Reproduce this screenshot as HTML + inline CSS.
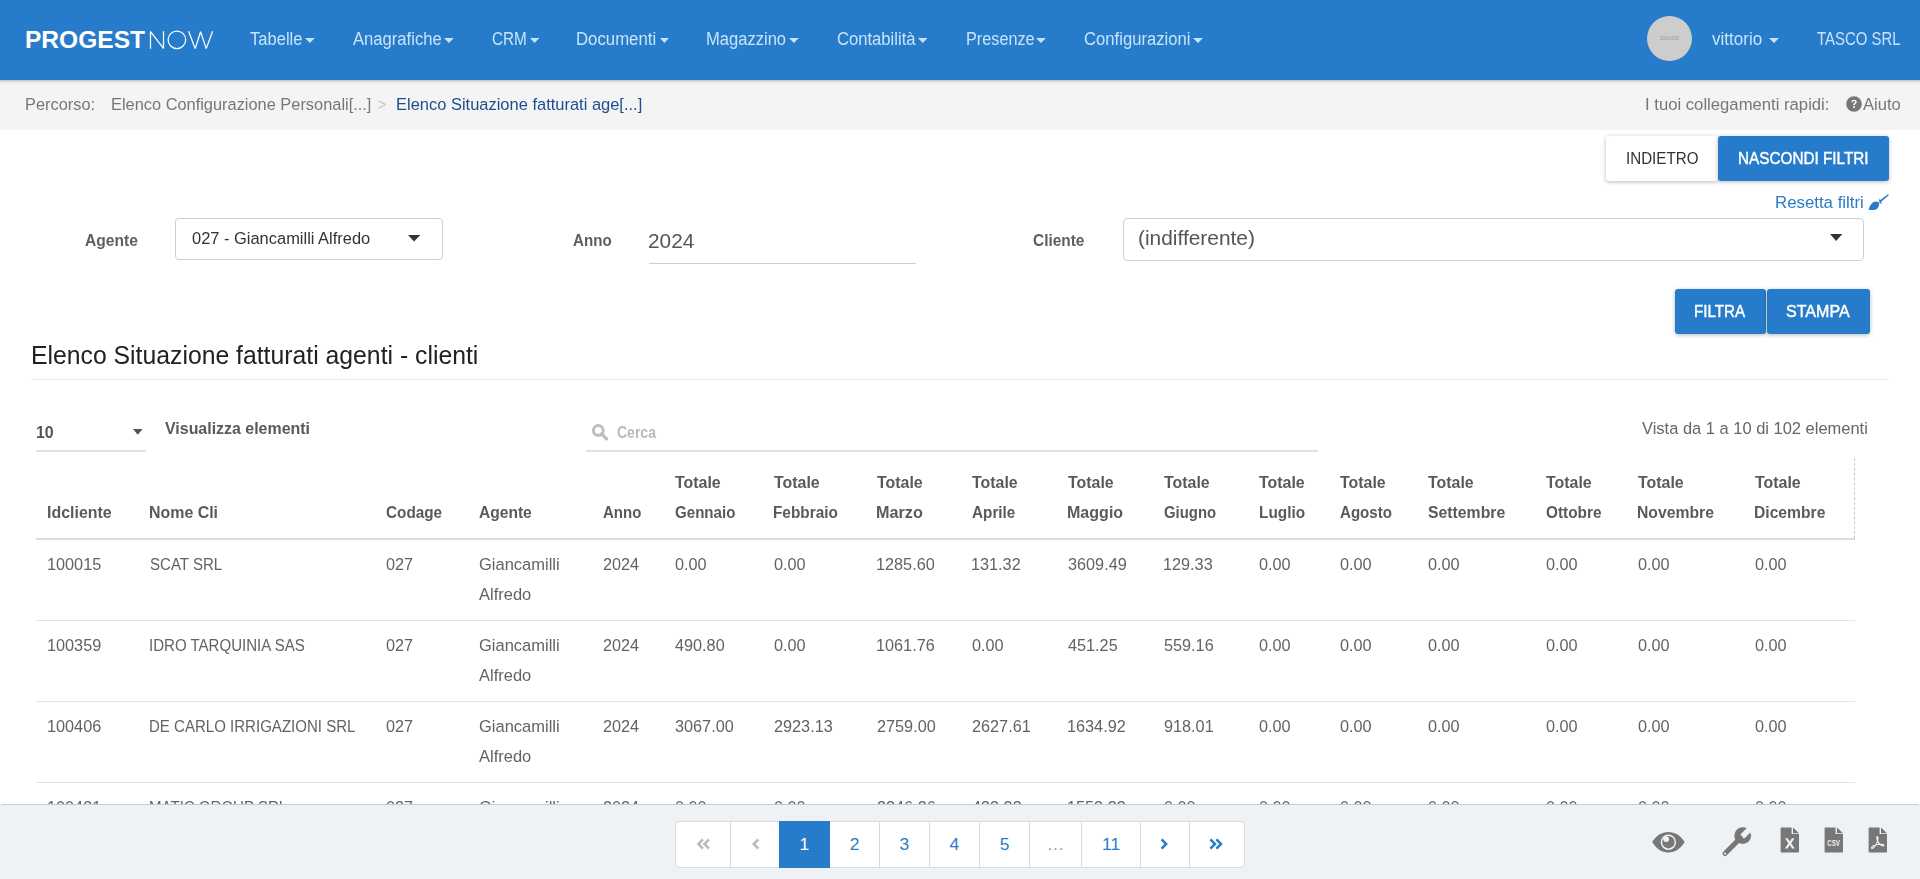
<!DOCTYPE html>
<html><head><meta charset="utf-8"><title>Progest</title>
<style>
html,body{margin:0;padding:0;width:1920px;height:879px;overflow:hidden;background:#fff;font-family:"Liberation Sans",sans-serif}
.a{position:absolute}
.t{position:absolute;white-space:pre;line-height:1;transform-origin:0 0}
</style></head><body>
<!-- header -->
<div class="a" style="left:0;top:0;width:1920px;height:80px;background:#267cca"></div>
<div class="a" style="left:0;top:80px;width:1920px;height:50px;background:#f4f4f4"></div>
<div class="a" style="left:0;top:80px;width:1920px;height:4px;background:linear-gradient(rgba(0,0,0,.22),rgba(0,0,0,.06) 50%,rgba(0,0,0,0))"></div>
<svg class="a" style="left:0;top:0" width="240" height="80" viewBox="0 0 240 80">
 <text x="25" y="48.3" font-family="Liberation Sans" font-weight="700" font-size="24.5" fill="#fff" textLength="120" lengthAdjust="spacingAndGlyphs">PROGEST</text>
 <g fill="none" stroke="#fff" stroke-width="1.25" stroke-linejoin="bevel">
  <path d="M150.5 48.8V31.6L163.5 48.4V31.2"/>
  <circle cx="176.9" cy="39.8" r="8.8"/>
  <path d="M188.6 31.2L195.2 48.6L200.6 31.8L206.2 48.6L212.6 31.2"/>
 </g>
</svg>
<div class="a" style="left:1647px;top:16px;width:45px;height:45px;border-radius:50%;background:#cdcdcd"></div>
<div class="a" style="left:1647px;top:34px;width:45px;text-align:center;font-size:5px;color:#999;line-height:8px">100x100</div>
<svg class="a" style="left:305.0px;top:38.0px" width="9.8" height="5.0" viewBox="0 0 9.8 5.0"><path d="M0 0H9.8L4.90 5.0Z" fill="#c9e3fa"/></svg>
<svg class="a" style="left:444.0px;top:38.0px" width="9.8" height="5.0" viewBox="0 0 9.8 5.0"><path d="M0 0H9.8L4.90 5.0Z" fill="#c9e3fa"/></svg>
<svg class="a" style="left:529.6px;top:38.0px" width="9.2" height="5.0" viewBox="0 0 9.2 5.0"><path d="M0 0H9.2L4.60 5.0Z" fill="#c9e3fa"/></svg>
<svg class="a" style="left:659.7px;top:38.0px" width="8.9" height="5.0" viewBox="0 0 8.9 5.0"><path d="M0 0H8.9L4.45 5.0Z" fill="#c9e3fa"/></svg>
<svg class="a" style="left:789.0px;top:38.0px" width="9.8" height="5.0" viewBox="0 0 9.8 5.0"><path d="M0 0H9.8L4.90 5.0Z" fill="#c9e3fa"/></svg>
<svg class="a" style="left:918.3px;top:38.0px" width="9.6" height="5.0" viewBox="0 0 9.6 5.0"><path d="M0 0H9.6L4.80 5.0Z" fill="#c9e3fa"/></svg>
<svg class="a" style="left:1036.0px;top:38.0px" width="10.0" height="5.0" viewBox="0 0 10.0 5.0"><path d="M0 0H10.0L5.00 5.0Z" fill="#c9e3fa"/></svg>
<svg class="a" style="left:1193.0px;top:38.0px" width="10.0" height="5.0" viewBox="0 0 10.0 5.0"><path d="M0 0H10.0L5.00 5.0Z" fill="#c9e3fa"/></svg>
<svg class="a" style="left:1769.0px;top:37.7px" width="10.0" height="5.1" viewBox="0 0 10.0 5.1"><path d="M0 0H10.0L5.00 5.1Z" fill="#c9e3fa"/></svg>
<!-- help icon -->
<svg class="a" style="left:1846px;top:96px" width="16" height="16" viewBox="0 0 16 16"><circle cx="8" cy="8" r="7.8" fill="#777"/><path d="M5.3 6.2C5.3 4.6 6.5 3.7 8 3.7C9.6 3.7 10.7 4.6 10.7 5.9C10.7 7.5 8.9 7.6 8.9 9.2H7.1C7.1 7 9 6.9 9 5.9C9 5.3 8.6 5.1 8 5.1C7.4 5.1 7 5.5 7 6.2Z" fill="#f4f4f4"/><rect x="7.1" y="10.3" width="1.8" height="1.8" fill="#f4f4f4"/></svg>
<!-- buttons -->
<div class="a" style="left:1606px;top:136px;width:112px;height:45px;background:#fff;border-radius:3px;box-shadow:0 1px 4px rgba(0,0,0,.28)"></div>
<div class="a" style="left:1718px;top:136px;width:171px;height:45px;background:#267cca;border-radius:3px;box-shadow:0 1px 4px rgba(0,0,0,.28)"></div>
<!-- brush -->
<svg class="a" style="left:1868px;top:193px" width="22" height="18" viewBox="0 0 22 18"><path d="M0.6 16.8C1.6 13.6 2.6 11.4 4.8 9.6C6.8 8.2 9.6 8.2 10.8 9.6C11.6 11 11.2 13.6 9.4 15.4C7.6 17 4.2 17.3 0.6 16.8Z" fill="#2a7bc6"/><path d="M11.3 7.8L20 1.2L20.8 2.2L12.6 9.2Z" fill="#2a7bc6"/><path d="M10.8 5.3L11.6 10.2L14 10.6Z" fill="#2a7bc6"/></svg>
<!-- filter boxes -->
<div class="a" style="left:175px;top:218px;width:266px;height:40px;border:1px solid #cfcfcf;border-radius:4px"></div>
<svg class="a" style="left:407.6px;top:235px" width="12.2" height="6.6" viewBox="0 0 12.2 6.6"><path d="M0 0H12.2L6.1 6.6Z" fill="#333"/></svg>
<div class="a" style="left:649px;top:262.5px;width:267px;height:1.5px;background:#cfcfcf"></div>
<div class="a" style="left:1123px;top:218px;width:739px;height:41px;border:1px solid #cfcfcf;border-radius:4px"></div>
<svg class="a" style="left:1830px;top:234px" width="12.3" height="7" viewBox="0 0 12.3 7"><path d="M0 0H12.3L6.15 7Z" fill="#333"/></svg>
<div class="a" style="left:1675px;top:289px;width:91px;height:44.5px;background:#267cca;border-radius:3px;box-shadow:0 1px 4px rgba(0,0,0,.28)"></div>
<div class="a" style="left:1766.5px;top:289px;width:103.5px;height:44.5px;background:#267cca;border-radius:3px;box-shadow:0 1px 4px rgba(0,0,0,.28)"></div>
<div class="a" style="left:31px;top:379px;width:1858px;height:1px;background:#e6e6e6"></div>
<!-- table controls -->
<div class="a" style="left:36px;top:450px;width:110px;height:2px;background:#e0e0e0"></div>
<svg class="a" style="left:132.7px;top:429.3px" width="9.6" height="5.7" viewBox="0 0 9.6 5.7"><path d="M0 0H9.6L4.8 5.7Z" fill="#555"/></svg>
<div class="a" style="left:586px;top:450px;width:732px;height:2px;background:#e0e0e0"></div>
<svg class="a" style="left:590px;top:422px" width="20" height="20" viewBox="0 0 20 20"><circle cx="8.3" cy="8.4" r="4.9" fill="none" stroke="#bdbdbd" stroke-width="2.9"/><path d="M11.6 11.8L16.6 16.8" stroke="#bdbdbd" stroke-width="3.2" stroke-linecap="round"/></svg>
<!-- table -->
<div class="a" style="left:36px;top:538px;width:1819px;height:2px;background:#dcdcdc"></div>
<div class="a" style="left:1853.5px;top:458px;width:0;height:81px;border-left:1px dashed #c8c8c8"></div>
<div class="a" style="left:36px;top:620px;width:1819px;height:1px;background:#e3e3e3"></div>
<div class="a" style="left:36px;top:701px;width:1819px;height:1px;background:#e3e3e3"></div>
<div class="a" style="left:36px;top:782px;width:1819px;height:1px;background:#e3e3e3"></div>
<span class="t" style="left:250.30px;top:31.00px;font-size:17.6px;font-weight:400;color:#c9e3fa;transform:scaleX(0.9405);">Tabelle</span>
<span class="t" style="left:353.00px;top:31.00px;font-size:17.6px;font-weight:400;color:#c9e3fa;transform:scaleX(0.9451);">Anagrafiche</span>
<span class="t" style="left:491.50px;top:31.00px;font-size:17.6px;font-weight:400;color:#c9e3fa;transform:scaleX(0.8678);">CRM</span>
<span class="t" style="left:576.05px;top:31.00px;font-size:17.6px;font-weight:400;color:#c9e3fa;transform:scaleX(0.9527);">Documenti</span>
<span class="t" style="left:705.76px;top:31.00px;font-size:17.6px;font-weight:400;color:#c9e3fa;transform:scaleX(0.9407);">Magazzino</span>
<span class="t" style="left:836.70px;top:31.00px;font-size:17.6px;font-weight:400;color:#c9e3fa;transform:scaleX(0.9442);">Contabilità</span>
<span class="t" style="left:965.58px;top:31.00px;font-size:17.6px;font-weight:400;color:#c9e3fa;transform:scaleX(0.9236);">Presenze</span>
<span class="t" style="left:1084.20px;top:31.00px;font-size:17.6px;font-weight:400;color:#c9e3fa;transform:scaleX(0.9466);">Configurazioni</span>
<span class="t" style="left:1711.50px;top:30.80px;font-size:17.6px;font-weight:400;color:#c9e3fa;transform:scaleX(0.9686);">vittorio</span>
<span class="t" style="left:1817.00px;top:31.00px;font-size:17.6px;font-weight:400;color:#c9e3fa;transform:scaleX(0.8486);">TASCO SRL</span>
<span class="t" style="left:25.06px;top:96.00px;font-size:17.4px;font-weight:400;color:#777;transform:scaleX(0.9409);">Percorso:</span>
<span class="t" style="left:111.06px;top:96.00px;font-size:17.4px;font-weight:400;color:#777;transform:scaleX(0.9419);">Elenco Configurazione Personali[...]</span>
<span class="t" style="left:377.70px;top:96.00px;font-size:17.4px;font-weight:400;color:#c4c4c4;transform:scaleX(0.8000);">&gt;</span>
<span class="t" style="left:395.75px;top:96.00px;font-size:17.4px;font-weight:400;color:#1d4f8e;transform:scaleX(0.9469);">Elenco Situazione fatturati age[...]</span>
<span class="t" style="left:1644.94px;top:95.90px;font-size:17.4px;font-weight:400;color:#777;transform:scaleX(0.9589);">I tuoi collegamenti rapidi:</span>
<span class="t" style="left:1863.30px;top:95.90px;font-size:17.4px;font-weight:400;color:#777;transform:scaleX(0.9521);">Aiuto</span>
<span class="t" style="left:1625.63px;top:150.10px;font-size:17.4px;font-weight:400;color:#333;transform:scaleX(0.8717);">INDIETRO</span>
<span class="t" style="left:1738.42px;top:149.70px;font-size:17.4px;font-weight:400;color:#fff;transform:scaleX(0.8797);-webkit-text-stroke:0.45px #fff">NASCONDI FILTRI</span>
<span class="t" style="left:1775.03px;top:194.20px;font-size:17.4px;font-weight:400;color:#2a7bc6;transform:scaleX(0.9672);">Resetta filtri</span>
<span class="t" style="left:84.60px;top:232.20px;font-size:17.1px;font-weight:700;color:#5e5e5e;transform:scaleX(0.9125);">Agente</span>
<span class="t" style="left:191.50px;top:231.00px;font-size:16.9px;font-weight:400;color:#333;transform:scaleX(0.9733);">027 - Giancamilli Alfredo</span>
<span class="t" style="left:572.70px;top:232.20px;font-size:17.1px;font-weight:700;color:#5e5e5e;transform:scaleX(0.8860);">Anno</span>
<span class="t" style="left:647.97px;top:231.30px;font-size:20.3px;font-weight:400;color:#555;transform:scaleX(1.0265);">2024</span>
<span class="t" style="left:1033.30px;top:231.90px;font-size:17.1px;font-weight:700;color:#5e5e5e;transform:scaleX(0.9029);">Cliente</span>
<span class="t" style="left:1138.17px;top:228.00px;font-size:20.3px;font-weight:400;color:#555;transform:scaleX(1.0301);">(indifferente)</span>
<span class="t" style="left:1694.13px;top:303.20px;font-size:17.4px;font-weight:400;color:#fff;transform:scaleX(0.8739);-webkit-text-stroke:0.45px #fff">FILTRA</span>
<span class="t" style="left:1786.00px;top:303.20px;font-size:17.4px;font-weight:400;color:#fff;transform:scaleX(0.9232);-webkit-text-stroke:0.45px #fff">STAMPA</span>
<span class="t" style="left:30.92px;top:343.20px;font-size:25px;font-weight:400;color:#222;transform:scaleX(0.9904);">Elenco Situazione fatturati agenti - clienti</span>
<span class="t" style="left:35.73px;top:424.40px;font-size:16.4px;font-weight:700;color:#555;transform:scaleX(0.9699);">10</span>
<span class="t" style="left:165.00px;top:420.30px;font-size:17.1px;font-weight:700;color:#5a5a5a;transform:scaleX(0.9325);">Visualizza elementi</span>
<span class="t" style="left:616.70px;top:425.20px;font-size:16.6px;font-weight:700;color:#bababa;transform:scaleX(0.8444);">Cerca</span>
<span class="t" style="left:1642.40px;top:420.20px;font-size:17.4px;font-weight:400;color:#666;transform:scaleX(0.9469);">Vista da 1 a 10 di 102 elementi</span>
<span class="t" style="left:46.77px;top:504.00px;font-size:17.1px;font-weight:700;color:#5a5a5a;transform:scaleX(0.9331);">Idcliente</span>
<span class="t" style="left:148.57px;top:504.00px;font-size:17.1px;font-weight:700;color:#5a5a5a;transform:scaleX(0.9318);">Nome Cli</span>
<span class="t" style="left:385.70px;top:504.00px;font-size:17.1px;font-weight:700;color:#5a5a5a;transform:scaleX(0.8942);">Codage</span>
<span class="t" style="left:478.70px;top:504.00px;font-size:17.1px;font-weight:700;color:#5a5a5a;transform:scaleX(0.9107);">Agente</span>
<span class="t" style="left:603.40px;top:504.00px;font-size:17.1px;font-weight:700;color:#5a5a5a;transform:scaleX(0.8768);">Anno</span>
<span class="t" style="left:675.00px;top:474.00px;font-size:17.1px;font-weight:700;color:#5a5a5a;transform:scaleX(0.9308);">Totale</span>
<span class="t" style="left:675.00px;top:504.00px;font-size:17.1px;font-weight:700;color:#5a5a5a;transform:scaleX(0.8831);">Gennaio</span>
<span class="t" style="left:773.50px;top:474.00px;font-size:17.1px;font-weight:700;color:#5a5a5a;transform:scaleX(0.9308);">Totale</span>
<span class="t" style="left:772.60px;top:504.00px;font-size:17.1px;font-weight:700;color:#5a5a5a;transform:scaleX(0.8977);">Febbraio</span>
<span class="t" style="left:876.70px;top:474.00px;font-size:17.1px;font-weight:700;color:#5a5a5a;transform:scaleX(0.9308);">Totale</span>
<span class="t" style="left:875.75px;top:504.00px;font-size:17.1px;font-weight:700;color:#5a5a5a;transform:scaleX(0.9469);">Marzo</span>
<span class="t" style="left:972.00px;top:474.00px;font-size:17.1px;font-weight:700;color:#5a5a5a;transform:scaleX(0.9308);">Totale</span>
<span class="t" style="left:972.00px;top:504.00px;font-size:17.1px;font-weight:700;color:#5a5a5a;transform:scaleX(0.8949);">Aprile</span>
<span class="t" style="left:1067.70px;top:474.00px;font-size:17.1px;font-weight:700;color:#5a5a5a;transform:scaleX(0.9308);">Totale</span>
<span class="t" style="left:1066.76px;top:504.00px;font-size:17.1px;font-weight:700;color:#5a5a5a;transform:scaleX(0.9387);">Maggio</span>
<span class="t" style="left:1163.50px;top:474.00px;font-size:17.1px;font-weight:700;color:#5a5a5a;transform:scaleX(0.9308);">Totale</span>
<span class="t" style="left:1163.50px;top:504.00px;font-size:17.1px;font-weight:700;color:#5a5a5a;transform:scaleX(0.8708);">Giugno</span>
<span class="t" style="left:1259.40px;top:474.00px;font-size:17.1px;font-weight:700;color:#5a5a5a;transform:scaleX(0.9308);">Totale</span>
<span class="t" style="left:1258.50px;top:504.00px;font-size:17.1px;font-weight:700;color:#5a5a5a;transform:scaleX(0.8992);">Luglio</span>
<span class="t" style="left:1339.60px;top:474.00px;font-size:17.1px;font-weight:700;color:#5a5a5a;transform:scaleX(0.9308);">Totale</span>
<span class="t" style="left:1339.60px;top:504.00px;font-size:17.1px;font-weight:700;color:#5a5a5a;transform:scaleX(0.8814);">Agosto</span>
<span class="t" style="left:1428.30px;top:474.00px;font-size:17.1px;font-weight:700;color:#5a5a5a;transform:scaleX(0.9308);">Totale</span>
<span class="t" style="left:1428.30px;top:504.00px;font-size:17.1px;font-weight:700;color:#5a5a5a;transform:scaleX(0.9237);">Settembre</span>
<span class="t" style="left:1546.30px;top:474.00px;font-size:17.1px;font-weight:700;color:#5a5a5a;transform:scaleX(0.9308);">Totale</span>
<span class="t" style="left:1546.30px;top:504.00px;font-size:17.1px;font-weight:700;color:#5a5a5a;transform:scaleX(0.8985);">Ottobre</span>
<span class="t" style="left:1638.30px;top:474.00px;font-size:17.1px;font-weight:700;color:#5a5a5a;transform:scaleX(0.9308);">Totale</span>
<span class="t" style="left:1637.38px;top:504.00px;font-size:17.1px;font-weight:700;color:#5a5a5a;transform:scaleX(0.9197);">Novembre</span>
<span class="t" style="left:1755.00px;top:474.00px;font-size:17.1px;font-weight:700;color:#5a5a5a;transform:scaleX(0.9308);">Totale</span>
<span class="t" style="left:1754.08px;top:504.00px;font-size:17.1px;font-weight:700;color:#5a5a5a;transform:scaleX(0.9162);">Dicembre</span>
<span class="t" style="left:46.75px;top:556.00px;font-size:17.1px;font-weight:400;color:#636363;transform:scaleX(0.9500);">100015</span>
<span class="t" style="left:149.50px;top:556.00px;font-size:17.1px;font-weight:400;color:#636363;transform:scaleX(0.8800);">SCAT SRL</span>
<span class="t" style="left:385.70px;top:556.00px;font-size:17.1px;font-weight:400;color:#636363;transform:scaleX(0.9500);">027</span>
<span class="t" style="left:478.70px;top:556.00px;font-size:17.1px;font-weight:400;color:#636363;transform:scaleX(0.9650);">Giancamilli</span>
<span class="t" style="left:603.40px;top:556.00px;font-size:17.1px;font-weight:400;color:#636363;transform:scaleX(0.9500);">2024</span>
<span class="t" style="left:675.00px;top:556.00px;font-size:17.1px;font-weight:400;color:#636363;transform:scaleX(0.9500);">0.00</span>
<span class="t" style="left:773.50px;top:556.00px;font-size:17.1px;font-weight:400;color:#636363;transform:scaleX(0.9500);">0.00</span>
<span class="t" style="left:875.75px;top:556.00px;font-size:17.1px;font-weight:400;color:#636363;transform:scaleX(0.9500);">1285.60</span>
<span class="t" style="left:971.05px;top:556.00px;font-size:17.1px;font-weight:400;color:#636363;transform:scaleX(0.9500);">131.32</span>
<span class="t" style="left:1067.70px;top:556.00px;font-size:17.1px;font-weight:400;color:#636363;transform:scaleX(0.9500);">3609.49</span>
<span class="t" style="left:1162.55px;top:556.00px;font-size:17.1px;font-weight:400;color:#636363;transform:scaleX(0.9500);">129.33</span>
<span class="t" style="left:1259.40px;top:556.00px;font-size:17.1px;font-weight:400;color:#636363;transform:scaleX(0.9500);">0.00</span>
<span class="t" style="left:1339.60px;top:556.00px;font-size:17.1px;font-weight:400;color:#636363;transform:scaleX(0.9500);">0.00</span>
<span class="t" style="left:1428.30px;top:556.00px;font-size:17.1px;font-weight:400;color:#636363;transform:scaleX(0.9500);">0.00</span>
<span class="t" style="left:1546.30px;top:556.00px;font-size:17.1px;font-weight:400;color:#636363;transform:scaleX(0.9500);">0.00</span>
<span class="t" style="left:1638.30px;top:556.00px;font-size:17.1px;font-weight:400;color:#636363;transform:scaleX(0.9500);">0.00</span>
<span class="t" style="left:1755.00px;top:556.00px;font-size:17.1px;font-weight:400;color:#636363;transform:scaleX(0.9500);">0.00</span>
<span class="t" style="left:478.70px;top:586.00px;font-size:17.1px;font-weight:400;color:#636363;transform:scaleX(0.9650);">Alfredo</span>
<span class="t" style="left:46.75px;top:637.30px;font-size:17.1px;font-weight:400;color:#636363;transform:scaleX(0.9500);">100359</span>
<span class="t" style="left:148.62px;top:637.30px;font-size:17.1px;font-weight:400;color:#636363;transform:scaleX(0.8800);">IDRO TARQUINIA SAS</span>
<span class="t" style="left:385.70px;top:637.30px;font-size:17.1px;font-weight:400;color:#636363;transform:scaleX(0.9500);">027</span>
<span class="t" style="left:478.70px;top:637.30px;font-size:17.1px;font-weight:400;color:#636363;transform:scaleX(0.9650);">Giancamilli</span>
<span class="t" style="left:603.40px;top:637.30px;font-size:17.1px;font-weight:400;color:#636363;transform:scaleX(0.9500);">2024</span>
<span class="t" style="left:675.00px;top:637.30px;font-size:17.1px;font-weight:400;color:#636363;transform:scaleX(0.9500);">490.80</span>
<span class="t" style="left:773.50px;top:637.30px;font-size:17.1px;font-weight:400;color:#636363;transform:scaleX(0.9500);">0.00</span>
<span class="t" style="left:875.75px;top:637.30px;font-size:17.1px;font-weight:400;color:#636363;transform:scaleX(0.9500);">1061.76</span>
<span class="t" style="left:972.00px;top:637.30px;font-size:17.1px;font-weight:400;color:#636363;transform:scaleX(0.9500);">0.00</span>
<span class="t" style="left:1067.70px;top:637.30px;font-size:17.1px;font-weight:400;color:#636363;transform:scaleX(0.9500);">451.25</span>
<span class="t" style="left:1163.50px;top:637.30px;font-size:17.1px;font-weight:400;color:#636363;transform:scaleX(0.9500);">559.16</span>
<span class="t" style="left:1259.40px;top:637.30px;font-size:17.1px;font-weight:400;color:#636363;transform:scaleX(0.9500);">0.00</span>
<span class="t" style="left:1339.60px;top:637.30px;font-size:17.1px;font-weight:400;color:#636363;transform:scaleX(0.9500);">0.00</span>
<span class="t" style="left:1428.30px;top:637.30px;font-size:17.1px;font-weight:400;color:#636363;transform:scaleX(0.9500);">0.00</span>
<span class="t" style="left:1546.30px;top:637.30px;font-size:17.1px;font-weight:400;color:#636363;transform:scaleX(0.9500);">0.00</span>
<span class="t" style="left:1638.30px;top:637.30px;font-size:17.1px;font-weight:400;color:#636363;transform:scaleX(0.9500);">0.00</span>
<span class="t" style="left:1755.00px;top:637.30px;font-size:17.1px;font-weight:400;color:#636363;transform:scaleX(0.9500);">0.00</span>
<span class="t" style="left:478.70px;top:667.30px;font-size:17.1px;font-weight:400;color:#636363;transform:scaleX(0.9650);">Alfredo</span>
<span class="t" style="left:46.75px;top:718.30px;font-size:17.1px;font-weight:400;color:#636363;transform:scaleX(0.9500);">100406</span>
<span class="t" style="left:148.62px;top:718.30px;font-size:17.1px;font-weight:400;color:#636363;transform:scaleX(0.8800);">DE CARLO IRRIGAZIONI SRL</span>
<span class="t" style="left:385.70px;top:718.30px;font-size:17.1px;font-weight:400;color:#636363;transform:scaleX(0.9500);">027</span>
<span class="t" style="left:478.70px;top:718.30px;font-size:17.1px;font-weight:400;color:#636363;transform:scaleX(0.9650);">Giancamilli</span>
<span class="t" style="left:603.40px;top:718.30px;font-size:17.1px;font-weight:400;color:#636363;transform:scaleX(0.9500);">2024</span>
<span class="t" style="left:675.00px;top:718.30px;font-size:17.1px;font-weight:400;color:#636363;transform:scaleX(0.9500);">3067.00</span>
<span class="t" style="left:773.50px;top:718.30px;font-size:17.1px;font-weight:400;color:#636363;transform:scaleX(0.9500);">2923.13</span>
<span class="t" style="left:876.70px;top:718.30px;font-size:17.1px;font-weight:400;color:#636363;transform:scaleX(0.9500);">2759.00</span>
<span class="t" style="left:972.00px;top:718.30px;font-size:17.1px;font-weight:400;color:#636363;transform:scaleX(0.9500);">2627.61</span>
<span class="t" style="left:1066.75px;top:718.30px;font-size:17.1px;font-weight:400;color:#636363;transform:scaleX(0.9500);">1634.92</span>
<span class="t" style="left:1163.50px;top:718.30px;font-size:17.1px;font-weight:400;color:#636363;transform:scaleX(0.9500);">918.01</span>
<span class="t" style="left:1259.40px;top:718.30px;font-size:17.1px;font-weight:400;color:#636363;transform:scaleX(0.9500);">0.00</span>
<span class="t" style="left:1339.60px;top:718.30px;font-size:17.1px;font-weight:400;color:#636363;transform:scaleX(0.9500);">0.00</span>
<span class="t" style="left:1428.30px;top:718.30px;font-size:17.1px;font-weight:400;color:#636363;transform:scaleX(0.9500);">0.00</span>
<span class="t" style="left:1546.30px;top:718.30px;font-size:17.1px;font-weight:400;color:#636363;transform:scaleX(0.9500);">0.00</span>
<span class="t" style="left:1638.30px;top:718.30px;font-size:17.1px;font-weight:400;color:#636363;transform:scaleX(0.9500);">0.00</span>
<span class="t" style="left:1755.00px;top:718.30px;font-size:17.1px;font-weight:400;color:#636363;transform:scaleX(0.9500);">0.00</span>
<span class="t" style="left:478.70px;top:748.30px;font-size:17.1px;font-weight:400;color:#636363;transform:scaleX(0.9650);">Alfredo</span>
<span class="t" style="left:46.75px;top:799.30px;font-size:17.1px;font-weight:400;color:#636363;transform:scaleX(0.9500);">100431</span>
<span class="t" style="left:148.62px;top:799.30px;font-size:17.1px;font-weight:400;color:#636363;transform:scaleX(0.8800);">MATIC GROUP SRL</span>
<span class="t" style="left:385.70px;top:799.30px;font-size:17.1px;font-weight:400;color:#636363;transform:scaleX(0.9500);">027</span>
<span class="t" style="left:478.70px;top:799.30px;font-size:17.1px;font-weight:400;color:#636363;transform:scaleX(0.9650);">Giancamilli</span>
<span class="t" style="left:603.40px;top:799.30px;font-size:17.1px;font-weight:400;color:#636363;transform:scaleX(0.9500);">2024</span>
<span class="t" style="left:675.00px;top:799.30px;font-size:17.1px;font-weight:400;color:#636363;transform:scaleX(0.9500);">0.00</span>
<span class="t" style="left:773.50px;top:799.30px;font-size:17.1px;font-weight:400;color:#636363;transform:scaleX(0.9500);">0.00</span>
<span class="t" style="left:876.70px;top:799.30px;font-size:17.1px;font-weight:400;color:#636363;transform:scaleX(0.9500);">2246.26</span>
<span class="t" style="left:972.00px;top:799.30px;font-size:17.1px;font-weight:400;color:#636363;transform:scaleX(0.9500);">433.33</span>
<span class="t" style="left:1066.75px;top:799.30px;font-size:17.1px;font-weight:400;color:#636363;transform:scaleX(0.9500);">1553.33</span>
<span class="t" style="left:1163.50px;top:799.30px;font-size:17.1px;font-weight:400;color:#636363;transform:scaleX(0.9500);">0.00</span>
<span class="t" style="left:1259.40px;top:799.30px;font-size:17.1px;font-weight:400;color:#636363;transform:scaleX(0.9500);">0.00</span>
<span class="t" style="left:1339.60px;top:799.30px;font-size:17.1px;font-weight:400;color:#636363;transform:scaleX(0.9500);">0.00</span>
<span class="t" style="left:1428.30px;top:799.30px;font-size:17.1px;font-weight:400;color:#636363;transform:scaleX(0.9500);">0.00</span>
<span class="t" style="left:1546.30px;top:799.30px;font-size:17.1px;font-weight:400;color:#636363;transform:scaleX(0.9500);">0.00</span>
<span class="t" style="left:1638.30px;top:799.30px;font-size:17.1px;font-weight:400;color:#636363;transform:scaleX(0.9500);">0.00</span>
<span class="t" style="left:1755.00px;top:799.30px;font-size:17.1px;font-weight:400;color:#636363;transform:scaleX(0.9500);">0.00</span>
<!-- footer -->
<div class="a" style="left:0;top:804px;width:1920px;height:80px;background:#eef2f5;border-top:1px solid #cacaca;border-radius:3px 3px 0 0;z-index:5"></div>
<div class="a" style="left:675px;top:821px;width:568px;height:45px;border:1px solid #dadada;border-radius:4px;background:#fff;z-index:6"></div>
<div class="a" style="left:730px;top:822px;width:1px;height:45px;background:#dadada;z-index:6"></div>
<div class="a" style="left:879px;top:822px;width:1px;height:45px;background:#dadada;z-index:6"></div>
<div class="a" style="left:929px;top:822px;width:1px;height:45px;background:#dadada;z-index:6"></div>
<div class="a" style="left:979px;top:822px;width:1px;height:45px;background:#dadada;z-index:6"></div>
<div class="a" style="left:1029px;top:822px;width:1px;height:45px;background:#dadada;z-index:6"></div>
<div class="a" style="left:1081px;top:822px;width:1px;height:45px;background:#dadada;z-index:6"></div>
<div class="a" style="left:1140px;top:822px;width:1px;height:45px;background:#dadada;z-index:6"></div>
<div class="a" style="left:1189px;top:822px;width:1px;height:45px;background:#dadada;z-index:6"></div>
<div class="a" style="left:779px;top:821px;width:50.5px;height:47px;background:#267cca;z-index:6"></div>
<div class="a" style="left:779.0px;top:821px;width:50.8px;height:47px;line-height:47px;text-align:center;font-size:17.4px;color:#fff;z-index:7">1</div>
<div class="a" style="left:829.8px;top:821px;width:49.7px;height:47px;line-height:47px;text-align:center;font-size:17.4px;color:#2a7bc6;z-index:7">2</div>
<div class="a" style="left:879.5px;top:821px;width:49.9px;height:47px;line-height:47px;text-align:center;font-size:17.4px;color:#2a7bc6;z-index:7">3</div>
<div class="a" style="left:929.4px;top:821px;width:50.1px;height:47px;line-height:47px;text-align:center;font-size:17.4px;color:#2a7bc6;z-index:7">4</div>
<div class="a" style="left:979.5px;top:821px;width:50.0px;height:47px;line-height:47px;text-align:center;font-size:17.4px;color:#2a7bc6;z-index:7">5</div>
<div class="a" style="left:1029.5px;top:821px;width:52.1px;height:47px;line-height:47px;text-align:center;font-size:17.4px;color:#999;z-index:7">…</div>
<div class="a" style="left:1081.6px;top:821px;width:59.0px;height:47px;line-height:47px;text-align:center;font-size:17.4px;color:#2a7bc6;z-index:7">11</div>
<svg class="a" style="left:0;top:0;z-index:8" width="1920" height="879" viewBox="0 0 1920 879"><path d="M703.00 839.4L698.40 844L703.00 848.6" fill="none" stroke="#bbb" stroke-width="2.5"/><path d="M709.00 839.4L704.40 844L709.00 848.6" fill="none" stroke="#bbb" stroke-width="2.5"/><path d="M758.30 839.4L753.70 844L758.30 848.6" fill="none" stroke="#bbb" stroke-width="2.5"/><path d="M1161.60 839.4L1166.20 844L1161.60 848.6" fill="none" stroke="#2a7bc6" stroke-width="2.5"/><path d="M1210.40 839.4L1215.00 844L1210.40 848.6" fill="none" stroke="#2a7bc6" stroke-width="2.5"/><path d="M1216.40 839.4L1221.00 844L1216.40 848.6" fill="none" stroke="#2a7bc6" stroke-width="2.5"/></svg>
<!-- footer icons -->
<svg class="a" style="left:1650px;top:828px;z-index:7" width="38" height="28" viewBox="0 0 38 28">
 <path d="M2.2 14C6.2 7.4 11.6 4 18.3 4C25 4 30.6 7.4 34.7 14C30.6 20.6 25 24.5 18.3 24.5C11.6 24.5 6.2 20.6 2.2 14Z" fill="#777"/>
 <circle cx="18.4" cy="14.2" r="7.7" fill="#eef2f5"/>
 <circle cx="18.4" cy="14.2" r="6.2" fill="#777"/>
 <circle cx="16.2" cy="11.1" r="2.9" fill="#eef2f5"/>
</svg>
<svg class="a" style="left:1720px;top:826px;z-index:7" width="34" height="32" viewBox="0 0 34 32">
 <defs><mask id="wm"><rect width="34" height="32" fill="#fff"/><g transform="rotate(45 23.4 9.4)"><rect x="20.6" y="-4" width="5.6" height="13.4" fill="#000"/><circle cx="23.4" cy="9.4" r="2.8" fill="#000"/></g></mask></defs>
 <g mask="url(#wm)" fill="#777">
  <circle cx="22.7" cy="9.6" r="8.4"/>
 </g>
 <path d="M20.5 12L5 27.6" stroke="#777" stroke-width="5" stroke-linecap="round"/>
 <circle cx="5" cy="27.6" r="1.1" fill="#eef2f5"/>
</svg>
<svg class="a" style="left:1779.6px;top:826.5px;z-index:7" width="20" height="26" viewBox="0 0 20 26">
 <path d="M0.6 1.2C0.6 0.8 0.9 0.5 1.3 0.5H11.6V7.1H19V24.8C19 25.2 18.7 25.5 18.3 25.5H1.3C0.9 25.5 0.6 25.2 0.6 24.8Z" fill="#777"/>
 <path d="M13 0.5L19 6.3H13Z" fill="#777"/>
 <path d="M5 11.2H7.6L9.8 14.6L12 11.2H14.6L11.2 16.2L14.8 21.6H12.1L9.8 18L7.5 21.6H4.8L8.4 16.2Z" fill="#eef2f5"/>
</svg>
<svg class="a" style="left:1823.8px;top:826.5px;z-index:7" width="20" height="26" viewBox="0 0 20 26">
 <path d="M0.6 1.2C0.6 0.8 0.9 0.5 1.3 0.5H11.6V7.1H19V24.8C19 25.2 18.7 25.5 18.3 25.5H1.3C0.9 25.5 0.6 25.2 0.6 24.8Z" fill="#777"/>
 <path d="M13 0.5L19 6.3H13Z" fill="#777"/>
 <text x="9.6" y="19.3" font-family="Liberation Sans" font-weight="700" font-size="8.6" fill="#eef2f5" text-anchor="middle" textLength="12.6" lengthAdjust="spacingAndGlyphs">CSV</text>
</svg>
<svg class="a" style="left:1867.6px;top:826.5px;z-index:7" width="20" height="26" viewBox="0 0 20 26">
 <path d="M0.6 1.2C0.6 0.8 0.9 0.5 1.3 0.5H11.6V7.1H19V24.8C19 25.2 18.7 25.5 18.3 25.5H1.3C0.9 25.5 0.6 25.2 0.6 24.8Z" fill="#777"/>
 <path d="M13 0.5L19 6.3H13Z" fill="#777"/>
 <path d="M9.3 9.6C10.3 9.6 10.2 12.6 9 15.6C8 18 5.8 21.6 3.8 21.4C2.8 21.2 3.8 19.6 6.2 18.6C9 17.4 12.8 17 15 17.6C16.6 18.2 15.8 19.4 14.2 18.8C12.6 18.2 10.6 16 9.6 14C8.8 12.2 8.6 9.6 9.3 9.6Z" fill="none" stroke="#eef2f5" stroke-width="1.1"/>
</svg>
</body></html>
